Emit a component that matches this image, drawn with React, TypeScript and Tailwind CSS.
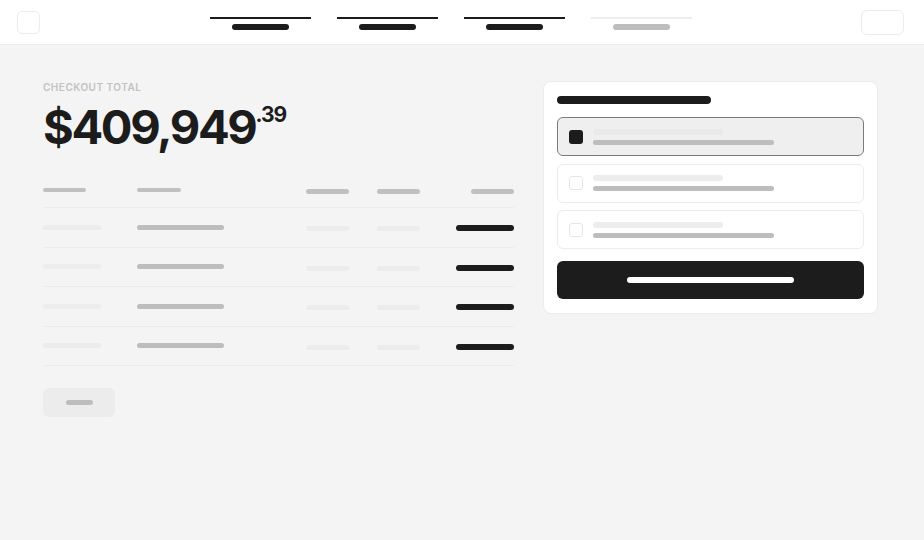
const steps = [
  { done: true },
  { done: true },
  { done: true },
  { done: false },
];

const rows = [0, 1, 2, 3];

function Bar({ className }: { className: string }) {
  return <div className={`rounded-full ${className}`} />;
}

function Option({ selected }: { selected?: boolean }) {
  return (
    <div
      className={`flex h-[39px] items-center gap-[10px] rounded-[6px] border px-[11px] ${
        selected ? "border-[#7a7a7a] bg-[#efefef]" : "border-[#ececec] bg-white"
      }`}
    >
      <div
        className={`h-[14px] w-[14px] rounded-[3px] ${
          selected ? "bg-[#1c1c1c]" : "border border-[#e6e6e6] bg-white"
        }`}
      />
      <div className="flex flex-col gap-[5px]">
        <Bar className={`h-[6px] w-[130px] ${selected ? "bg-[#e9e9e9]" : "bg-[#ededed]"}`} />
        <Bar className="h-[5px] w-[181px] bg-[#bdbdbd]" />
      </div>
    </div>
  );
}

export default function App() {
  return (
    <div className="min-h-[540px] bg-[#f4f4f4] font-['Inter',sans-serif]">
      <header className="flex h-[45px] items-center justify-between border-b border-[#ececec] bg-white pl-[17px] pr-[20px]">
        <div className="h-[23px] w-[23px] rounded-[5px] border border-[#ececec]" />
        <div className="flex gap-[26px] self-start pt-[17px]">
          {steps.map((s, i) => (
            <div key={i} className="flex w-[101px] flex-col items-center gap-[5px]">
              <div className={`h-[2px] w-full ${s.done ? "bg-[#1c1c1c]" : "bg-[#ececec]"}`} />
              <Bar className={`h-[6px] w-[57px] ${s.done ? "bg-[#1c1c1c]" : "bg-[#bdbdbd]"}`} />
            </div>
          ))}
        </div>
        <div className="h-[25px] w-[43px] rounded-[6px] border border-[#ececec]" />
      </header>

      <main className="flex gap-[29px] px-[43px]">
        <section className="w-[471px] pt-[35px]">
          <div className="text-[10px] leading-[14px] font-semibold tracking-wider text-[#c2c2c2] uppercase">
            Checkout total
          </div>
          <div className="mt-[5px] flex items-start text-[#1c1c1c]">
            <span className="text-[47px] leading-[56px] font-bold tracking-tighter">$409,949</span>
            <span className="mt-[4px] text-[21px] leading-[24px] font-bold tracking-tighter">.39</span>
          </div>

          <div className="mt-[26px]">
            <div className="grid h-[27px] grid-cols-[94px_169px_71px_1fr_1fr] border-b border-[#ececec] pt-[7px]">
              <Bar className="h-[4px] w-[43px] bg-[#c0c0c0]" />
              <Bar className="h-[4px] w-[44px] bg-[#c0c0c0]" />
              <Bar className="mt-[1px] h-[5px] w-[43px] bg-[#c0c0c0]" />
              <Bar className="mt-[1px] h-[5px] w-[43px] bg-[#c0c0c0]" />
              <Bar className="mt-[1px] h-[5px] w-[43px] justify-self-end bg-[#c0c0c0]" />
            </div>
            {rows.map((r) => (
              <div
                key={r}
                className="grid h-[39.5px] grid-cols-[94px_169px_71px_1fr_1fr] items-center border-b border-[#ececec]"
              >
                <Bar className="h-[5px] w-[58px] bg-[#ececec]" />
                <Bar className="h-[5px] w-[87px] bg-[#bdbdbd]" />
                <Bar className="mt-[3px] h-[5px] w-[43px] bg-[#ececec]" />
                <Bar className="mt-[3px] h-[5px] w-[43px] bg-[#ececec]" />
                <Bar className="mt-[2px] h-[6px] w-[58px] justify-self-end bg-[#1c1c1c]" />
              </div>
            ))}
          </div>

          <button className="mt-[22px] flex h-[29px] w-[72px] items-center justify-center rounded-[6px] bg-[#ececec]">
            <Bar className="h-[5px] w-[27px] bg-[#bdbdbd]" />
          </button>
        </section>

        <aside className="mt-[36px] flex w-[335px] flex-col self-start rounded-[8px] border border-[#ececec] bg-white px-[13px] pt-[14px] pb-[14px]">
          <Bar className="h-[8px] w-[154px] bg-[#1c1c1c]" />
          <div className="mt-[13px] flex flex-col gap-[7.5px]">
            <Option selected />
            <Option />
            <Option />
          </div>
          <button className="mt-[12px] flex h-[38px] items-center justify-center rounded-[6px] bg-[#1c1c1c]">
            <Bar className="h-[6px] w-[167px] bg-white" />
          </button>
        </aside>
      </main>
    </div>
  );
}
